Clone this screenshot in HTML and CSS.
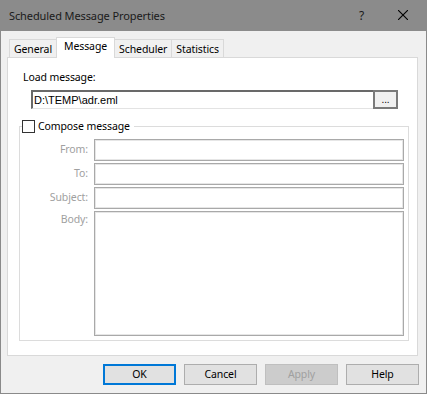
FILE: index.html
```html
<!DOCTYPE html>
<html>
    <head>
        <title>Scheduled Message Properties</title>
        <link rel="stylesheet" href="styles.css">
    </head>
    <body>
        <div class="window">
            <div class="titlebar">
                <span class="title">Scheduled Message Properties</span>
                <span class="help">?</span>
                <span class="close">
                    <svg width="10" height="10" viewBox="0 0 10 10">
                        <path d="M0 0L10 10M10 0L0 10" stroke="#000" stroke-width="1.1" fill="none"/>
                    </svg>
                </span>
            </div>
            <div class="dialog">
                <div class="tabs">
                    <div class="tab">General</div>
                    <div class="tab active">Message</div>
                    <div class="tab">Scheduler</div>
                    <div class="tab">Statistics</div>
                </div>
                <div class="panel">
                    <div class="load-label">Load message:</div>
                    <div class="file-row">
                        <div class="edit">D:\TEMP\adr.eml</div>
                        <div class="browse">...</div>
                    </div>
                    <fieldset class="group">
                        <legend><span class="checkbox"></span>Compose message</legend>
                        <div class="field-row">
                            <label>From:</label>
                            <div class="field"></div>
                        </div>
                        <div class="field-row">
                            <label>To:</label>
                            <div class="field"></div>
                        </div>
                        <div class="field-row">
                            <label>Subject:</label>
                            <div class="field"></div>
                        </div>
                        <div class="field-row body-row">
                            <label>Body:</label>
                            <div class="field body-field"></div>
                        </div>
                    </fieldset>
                </div>
                <div class="buttons">
                    <div class="button default">OK</div>
                    <div class="button">Cancel</div>
                    <div class="button disabled">Apply</div>
                    <div class="button">Help</div>
                </div>
            </div>
        </div>
    </body>
</html>
```

FILE: styles.css
```css
html, body {
    margin: 0;
    padding: 0;
    background: #f0f0f0;
}

body {
    font-family: "Noto Sans", "Open Sans", sans-serif;
    font-size: 10.5px;
    letter-spacing: -0.1px;
    color: #000;
}

.window {
    width: 427px;
    height: 394px;
    box-sizing: border-box;
    border: 1px solid #8a8a8a;
    border-top: none;
    background: #f0f0f0;
}

.titlebar {
    height: 31px;
    margin: 0 -1px;
    background: #8b8b8b;
    display: flex;
    align-items: center;
    padding-left: 9px;
}

.title {
    flex: 1;
    font-size: 11px;
    color: #1a1a1a;
    margin-top: -1px;
}

.help {
    font-size: 12px;
    color: #1a1a1a;
    margin-right: 34px;
    margin-top: -1px;
}

.close {
    display: flex;
    margin-right: 19px;
    margin-top: -1px;
}

.dialog {
    padding: 0 8px 0 6px;
}

.tabs {
    display: flex;
    align-items: flex-end;
    height: 26px;
    padding-left: 2px;
}

.tab {
    height: 18px;
    box-sizing: border-box;
    border: 1px solid #d9d9d9;
    border-bottom: none;
    background: #f0f0f0;
    padding: 0 4px;
    line-height: 18px;
}

.tab + .tab {
    margin-left: -1px;
}

.tab.active {
    height: 21px;
    margin-bottom: -1px;
    background: #fff;
    line-height: 16px;
    position: relative;
    z-index: 1;
    padding: 0 7px;
}

.panel {
    height: 299px;
    box-sizing: border-box;
    border: 1px solid #d9d9d9;
    background: #fff;
    padding: 12px 8px 0 15px;
}

.load-label {
    line-height: 15px;
}

.file-row {
    display: flex;
    margin: 5px 0 0 8px;
    height: 19px;
}

.edit {
    width: 342px;
    box-sizing: border-box;
    border-top: 2px solid #696969;
    border-left: 2px solid #696969;
    border-bottom: 1px solid #e3e3e3;
    font-family: "Liberation Sans", sans-serif;
    font-size: 11px;
    letter-spacing: 0;
    line-height: 16px;
    padding-left: 1px;
}

.browse {
    width: 25px;
    box-sizing: border-box;
    border: 2px solid #7a7a7a;
    background: #f0f0f0;
    text-align: center;
    font-family: "Liberation Sans", sans-serif;
    font-size: 10px;
    line-height: 15px;
}

.group {
    margin: 11px 0 0 -4px;
    padding: 6px 4px 4px 0;
    border: 1px solid #dcdcdc;
}

.group legend {
    display: flex;
    align-items: center;
    height: 13px;
    padding: 0 4px 0 0;
    margin-left: 2px;
    line-height: 13px;
}

.checkbox {
    width: 13px;
    height: 13px;
    box-sizing: border-box;
    border: 1px solid #333;
    background: #fff;
    margin-right: 3px;
}

.field-row {
    display: flex;
    margin-bottom: 2px;
}

.field-row label {
    width: 68px;
    margin-right: 6px;
    text-align: right;
    color: #a0a0a0;
    line-height: 20px;
}

.field {
    flex: 1;
    height: 22px;
    box-sizing: border-box;
    border: 1px solid #a9a9a9;
    box-shadow: inset 0 0 0 1px #e6e6e6;
    background: #fff;
}

.body-row {
    margin-top: 1px;
    margin-bottom: 0;
}

.body-row label {
    line-height: 16px;
}

.body-field {
    height: 125px;
}

.buttons {
    display: flex;
    justify-content: flex-end;
    gap: 8px;
    margin: 8px -1px 0 0;
}

.button {
    width: 73px;
    height: 21px;
    box-sizing: border-box;
    border: 1px solid #adadad;
    background: #e1e1e1;
    text-align: center;
    line-height: 19px;
}

.button.default {
    border: 2px solid #0078d7;
    line-height: 17px;
}

.button.disabled {
    background: #cccccc;
    border-color: #bfbfbf;
    color: #a0a0a0;
}
```
